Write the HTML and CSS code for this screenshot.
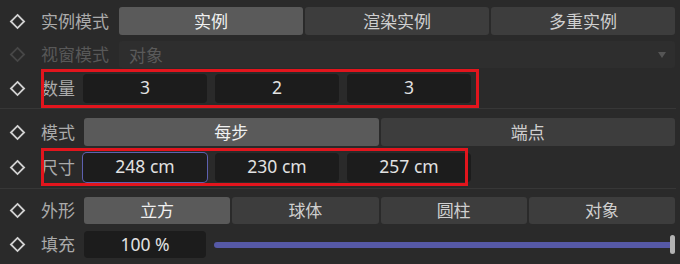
FILE: index.html
```html
<!DOCTYPE html>
<html lang="zh">
<head>
<meta charset="utf-8">
<link rel="stylesheet" href="styles.css">
</head>
<body>
<div class="panel">
  <div class="row r1">
    <span class="key"><svg viewBox="0 0 16 16"><path d="M8 1.8 L14.2 8 L8 14.2 L1.8 8 Z"/></svg></span>
    <span class="label wide">实例模式</span>
    <div class="seg seg3">
      <span class="opt on">实例</span><span class="opt">渲染实例</span><span class="opt">多重实例</span>
    </div>
  </div>
  <div class="row r2 disabled">
    <span class="key"><svg viewBox="0 0 16 16"><path d="M8 1.8 L14.2 8 L8 14.2 L1.8 8 Z"/></svg></span>
    <span class="label wide">视窗模式</span>
    <div class="dropdown"><span>对象</span><svg class="caret" viewBox="0 0 8 6"><path d="M0 0 H8 L4 6 Z"/></svg></div>
  </div>
  <div class="row r3 marked">
    <span class="key"><svg viewBox="0 0 16 16"><path d="M8 1.8 L14.2 8 L8 14.2 L1.8 8 Z"/></svg></span>
    <span class="label">数量</span>
    <div class="fields">
      <span class="field">3</span><span class="field">2</span><span class="field">3</span>
    </div>
    <div class="mark m1"></div>
  </div>
  <div class="sep s1"></div>
  <div class="row r4">
    <span class="key"><svg viewBox="0 0 16 16"><path d="M8 1.8 L14.2 8 L8 14.2 L1.8 8 Z"/></svg></span>
    <span class="label">模式</span>
    <div class="seg seg2">
      <span class="opt on">每步</span><span class="opt">端点</span>
    </div>
  </div>
  <div class="row r5 marked">
    <span class="key"><svg viewBox="0 0 16 16"><path d="M8 1.8 L14.2 8 L8 14.2 L1.8 8 Z"/></svg></span>
    <span class="label">尺寸</span>
    <div class="fields">
      <span class="field focus">248 cm</span><span class="field">230 cm</span><span class="field">257 cm</span>
    </div>
    <div class="mark m2"></div>
  </div>
  <div class="sep s2"></div>
  <div class="row r6">
    <span class="key"><svg viewBox="0 0 16 16"><path d="M8 1.8 L14.2 8 L8 14.2 L1.8 8 Z"/></svg></span>
    <span class="label">外形</span>
    <div class="seg seg4">
      <span class="opt on">立方</span><span class="opt">球体</span><span class="opt">圆柱</span><span class="opt">对象</span>
    </div>
  </div>
  <div class="row r7">
    <span class="key"><svg viewBox="0 0 16 16"><path d="M8 1.8 L14.2 8 L8 14.2 L1.8 8 Z"/></svg></span>
    <span class="label">填充</span>
    <span class="field single">100 %</span>
    <div class="slider"><div class="track"></div><div class="handle"></div></div>
  </div>
</div>
</body>
</html>
```

FILE: styles.css
```css
* { box-sizing: border-box; }
html, body { margin: 0; padding: 0; }
body {
  background: #2a2a2a;
  width: 680px;
  height: 264px;
  overflow: hidden;
  font-family: "Noto Sans", "Noto Sans CJK SC", sans-serif;
  font-size: 17px;
  color: #aaaaaa;
}
.panel {
  padding-top: 7px;
  width: 680px;
}
.row {
  display: flex;
  align-items: center;
  padding-right: 5px;
}
.key {
  width: 41px;
  flex: none;
  display: flex;
  align-items: center;
  padding-left: 9px;
}
.key svg {
  width: 17px;
  height: 17px;
  fill: none;
  stroke: #d2d2d2;
  stroke-width: 1.7;
}
.label {
  width: 42px;
  flex: none;
  white-space: nowrap;
  line-height: 1;
  color: #ababab;
}
.label.wide { width: 78px; }

.r1 { height: 28px; }
.r2 { height: 27px; margin-top: 6px; }
.r3 { height: 40px; }
.r4 { height: 28px; margin-top: 9px; }
.r5 { height: 40px; margin-top: 1px; }
.r6 { height: 27px; margin-top: 8px; }
.r7 { height: 27px; margin-top: 7px; }

.sep { height: 1px; background: #373737; width: 676px; }
.s1 { margin-top: 0; }
.s2 { margin-top: 1px; }

.seg {
  flex: 1;
  height: 100%;
  display: flex;
  gap: 2px;
}
.seg2, .seg4 { margin-left: 1px; }
.opt {
  flex: 1;
  display: flex;
  align-items: center;
  justify-content: center;
  background: #3d3d3d;
  color: #cfcfcf;
  border-radius: 3px;
  line-height: 1;
}
.opt.on { background: #5a5a5a; color: #f0f0f0; }

.disabled .key svg { stroke: #474747; }
.disabled .label { color: #585858; }
.dropdown {
  flex: 1;
  height: 100%;
  background: #2e2e2e;
  border-radius: 3px;
  display: flex;
  align-items: center;
  justify-content: space-between;
  padding: 0 9px 0 10px;
  color: #5a5a5a;
}
.caret { width: 8px; height: 6px; fill: #555555; }

.fields {
  display: flex;
  gap: 8px;
}
.field {
  width: 124px;
  height: 29px;
  background: #1c1c1c;
  border-radius: 4px;
  color: #e2e2e2;
  display: flex;
  align-items: center;
  justify-content: center;
  line-height: 1;
  font-size: 17.5px;
}
.field.focus { box-shadow: 0 0 0 1px #5d60b0; }
.field.single { width: 122px; height: 27px; margin-left: 1px; }

.marked { position: relative; }
.mark {
  position: absolute;
  border: 3px solid #e2151d;
  left: 41px;
  pointer-events: none;
}
.m1 { top: 1px; width: 438px; height: 39px; }
.m2 { top: 1px; width: 427px; height: 38px; }

.slider {
  flex: 1;
  margin-left: 8px;
  height: 100%;
  display: flex;
  align-items: center;
}
.track {
  flex: 1;
  height: 6px;
  background: #5659a6;
  border-radius: 3px 0 0 3px;
}
.handle {
  width: 5px;
  height: 19px;
  background: #b3b3b3;
  border-radius: 3px;
  margin-left: -2px;
}
```
